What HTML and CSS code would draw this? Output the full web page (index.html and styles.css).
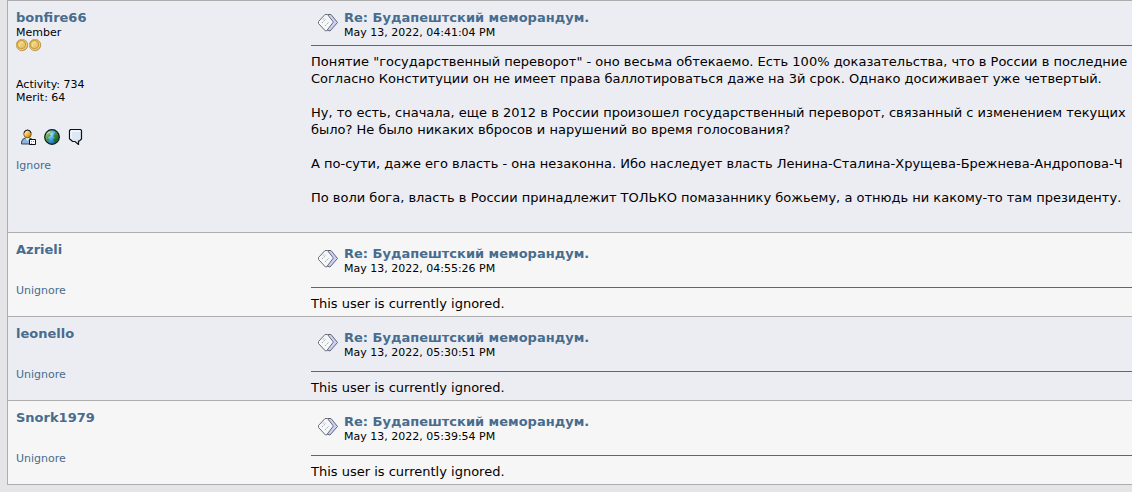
FILE: index.html
```
<!DOCTYPE html>
<html lang="ru">
<head>
    <meta charset="UTF-8">
    <meta name="viewport" content="width=device-width, initial-scale=1.0">
    <title>Будапештский меморандум.</title>
    <link rel="stylesheet" href="styles.css">
</head>
<body>
    <!-- shared icons -->
    <svg class="sprite" aria-hidden="true">
        <defs>
            <radialGradient id="gold" cx="45%" cy="45%" r="55%">
                <stop offset="0" stop-color="#efd27a"/>
                <stop offset="0.5" stop-color="#e6c465"/>
                <stop offset="0.65" stop-color="#c9993c"/>
                <stop offset="0.82" stop-color="#efd27c"/>
                <stop offset="1" stop-color="#b98b35"/>
            </radialGradient>
            <radialGradient id="sea" cx="35%" cy="30%" r="75%">
                <stop offset="0" stop-color="#d8f1ff"/>
                <stop offset="0.4" stop-color="#4fb0f2"/>
                <stop offset="1" stop-color="#1560b4"/>
            </radialGradient>
            <linearGradient id="land" x1="0" y1="0" x2="1" y2="1">
                <stop offset="0" stop-color="#c4dcbc"/>
                <stop offset="0.45" stop-color="#4b9a3c"/>
                <stop offset="1" stop-color="#0e4712"/>
            </linearGradient>
            <linearGradient id="face" x1="0" y1="0" x2="1" y2="1">
                <stop offset="0.15" stop-color="#fff3cd"/>
                <stop offset="0.55" stop-color="#f3b32c"/>
                <stop offset="1" stop-color="#b86d08"/>
            </linearGradient>
        </defs>
        <symbol id="coin" viewBox="0 0 13 13">
            <circle cx="6" cy="6" r="5.8" fill="url(#gold)" stroke="#b08a3e" stroke-width="0.6"/>
            <path d="M3.5 7.5A3 3 0 0 1 7 3.3" fill="none" stroke="#fbeaa8"/>
        </symbol>
        <symbol id="message" viewBox="0 0 20 20">
            <path d="M10 1.500h3l6.500 8-7.500 8.500-3-1z" fill="#ccd0f5" stroke="#60657c"/>
            <path d="M7 1.500h2.500L15 8.500v1L8.500 18h-1L.5 10.500V8.500z" fill="#f5f7f9" stroke="#666c74"/>
            <path d="M4 10l4-4M7 13l4-4" fill="none" stroke="#a4acb3" stroke-dasharray="2 1"/>
            <path d="M6.500 5l-2 2" fill="none" stroke="#c3c9ce"/>
        </symbol>
        <symbol id="profile" viewBox="0 0 16 16">
            <path d="M1.500 15v-2Q2 9.500 5.500 9h4q3 .5 3.500 3v3z" fill="#8fb3dd" stroke="#33465c"/>
            <path d="M5.500 9l2 3 2-3z" fill="#e8f1fb"/>
            <circle cx="7.500" cy="5" r="3.800" fill="url(#face)" stroke="#6b4a10" stroke-width=".8"/>
            <path d="M4 4Q4.500 1 7.500 1T11 4" fill="none" stroke="#1d1d1d"/>
            <path d="M9.500 10.500h6v5h-6z" fill="#fff" stroke="#111"/>
            <path d="M11 12h1v1h-1zM13 12h1v1h-1zM11 14h1v1h-1z" fill="#7c929c"/>
        </symbol>
        <symbol id="globe" viewBox="0 0 16 16">
            <circle cx="8" cy="8" r="7.300" fill="url(#sea)"/>
            <path d="M1 7Q2 2 7 1l1 2-2 2 1 2-3 1 1 3-1 3Q1 12 1 7zM11 2q4 2 4 6l-2 4-3 2-1-4 2-1-2-2 2-3z" fill="url(#land)"/>
            <path d="M3.500 4.500Q5 3 6.500 3" fill="none" stroke="#d7e9cf"/>
            <circle cx="8" cy="8" r="7.300" fill="none" stroke="#061b16" stroke-width="1.200"/>
        </symbol>
        <symbol id="bubble" viewBox="0 0 16 16">
            <path d="M2.500.5h10l1 1v8.500l-2 2H10.500v3.500L7 12.500H4.500l-2-2-1-.5V1.500z" fill="#dce9f5" stroke="#111" stroke-width="1.200"/>
            <path d="M3 10V2h9.500" fill="none" stroke="#fff"/>
        </symbol>
    </svg>

    <main class="topic">
        <article class="post">
            <div class="poster">
                <a class="poster-name" href="#">bonfire66</a>
                <div>Member</div>
                <div class="coins">
                    <svg class="coin" aria-hidden="true"><use href="#coin"/></svg><svg class="coin" aria-hidden="true"><use href="#coin"/></svg>
                </div>
                <div class="stats">
                    <div>Activity: 734</div>
                    <div>Merit: 64</div>
                </div>
                <div class="contacts">
                    <a href="#" aria-label="View Profile"><svg class="icon"><use href="#profile"/></svg></a>
                    <a href="#" aria-label="WWW"><svg class="icon"><use href="#globe"/></svg></a>
                    <a href="#" aria-label="Personal Message"><svg class="icon"><use href="#bubble"/></svg></a>
                </div>
                <a class="ignore" href="#">Ignore</a>
            </div>
            <div class="content">
                <header class="post-header">
                    <svg class="message-icon" aria-hidden="true"><use href="#message"/></svg>
                    <div>
                        <a class="subject" href="#">Re: Будапештский меморандум.</a>
                        <div>May 13, 2022, 04:41:04 PM</div>
                    </div>
                </header>
                <div class="text">
                    <p>Понятие "государственный переворот" - оно весьма обтекаемо. Есть 100% доказательства, что в России в последние<br>
                    Согласно Конституции он не имеет права баллотироваться даже на 3й срок. Однако досиживает уже четвертый.</p>
                    <p>Ну, то есть, сначала, еще в 2012 в России произошел государственный переворот, связанный с изменением текущих<br>
                    было? Не было никаких вбросов и нарушений во время голосования?</p>
                    <p>А по-сути, даже его власть - она незаконна. Ибо наследует власть Ленина-Сталина-Хрущева-Брежнева-Андропова-Ч</p>
                    <p>По воли бога, власть в России принадлежит ТОЛЬКО помазаннику божьему, а отнюдь ни какому-то там президенту.</p>
                </div>
            </div>
        </article>

        <article class="post ignored">
            <div class="poster">
                <a class="poster-name" href="#">Azrieli</a>
                <a class="ignore" href="#">Unignore</a>
            </div>
            <div class="content">
                <header class="post-header">
                    <svg class="message-icon" aria-hidden="true"><use href="#message"/></svg>
                    <div>
                        <a class="subject" href="#">Re: Будапештский меморандум.</a>
                        <div>May 13, 2022, 04:55:26 PM</div>
                    </div>
                </header>
                <div class="text">This user is currently ignored.</div>
            </div>
        </article>

        <article class="post ignored">
            <div class="poster">
                <a class="poster-name" href="#">leonello</a>
                <a class="ignore" href="#">Unignore</a>
            </div>
            <div class="content">
                <header class="post-header">
                    <svg class="message-icon" aria-hidden="true"><use href="#message"/></svg>
                    <div>
                        <a class="subject" href="#">Re: Будапештский меморандум.</a>
                        <div>May 13, 2022, 05:30:51 PM</div>
                    </div>
                </header>
                <div class="text">This user is currently ignored.</div>
            </div>
        </article>

        <article class="post ignored">
            <div class="poster">
                <a class="poster-name" href="#">Snork1979</a>
                <a class="ignore" href="#">Unignore</a>
            </div>
            <div class="content">
                <header class="post-header">
                    <svg class="message-icon" aria-hidden="true"><use href="#message"/></svg>
                    <div>
                        <a class="subject" href="#">Re: Будапештский меморандум.</a>
                        <div>May 13, 2022, 05:39:54 PM</div>
                    </div>
                </header>
                <div class="text">This user is currently ignored.</div>
            </div>
        </article>
    </main>
</body>
</html>
```
FILE: styles.css
```
body {
    margin: 0;
    padding: 0 0 7px 7px;
    background: #e5e5e8;
    color: #000;
    font-family: Verdana, 'DejaVu Sans', sans-serif;
    font-size: 11px;
    line-height: 13px;
}

a {
    color: #476c8e;
    text-decoration: none;
}

.sprite {
    position: absolute;
    width: 0;
    height: 0;
}

.topic {
    border-left: 1px solid #adadad;
    border-bottom: 1px solid #adadad;
    overflow: hidden;
}

.post {
    display: grid;
    grid-template-columns: 287px 1fr;
    column-gap: 8px;
    padding: 9px 0 0 8px;
    border-top: 1px solid #adadad;
    background: #ecedf3;
}

.post:nth-child(even) {
    background: #f6f6f6;
}

.poster-name,
.subject {
    display: block;
    font-size: 13px;
    font-weight: bold;
    line-height: 16px;
}

.coins {
    display: flex;
}

.coin {
    width: 13px;
    height: 13px;
}

.stats {
    margin-top: 26px;
}

.contacts {
    display: flex;
    gap: 8px;
    margin: 25px 0 14px 4px;
}

.icon {
    display: block;
    width: 16px;
    height: 16px;
}

.ignore {
    display: block;
}

.content {
    min-width: 0;
}

.post-header {
    display: flex;
    gap: 6px;
    height: 35px;
    padding-left: 7px;
    border-bottom: 1px solid #666;
}

.message-icon {
    width: 20px;
    height: 20px;
    margin-top: 3px;
}

.text {
    padding: 7px 0 26px;
    font-size: 13px;
    line-height: 17px;
    white-space: nowrap;
}

.text p {
    margin: 0 0 17px;
}

.text p:last-child {
    margin-bottom: 0;
}

.ignored .ignore {
    margin-top: 26px;
}

.ignored .post-header {
    height: 41px;
    padding-top: 4px;
}

.ignored .text {
    padding-bottom: 4px;
}
```
